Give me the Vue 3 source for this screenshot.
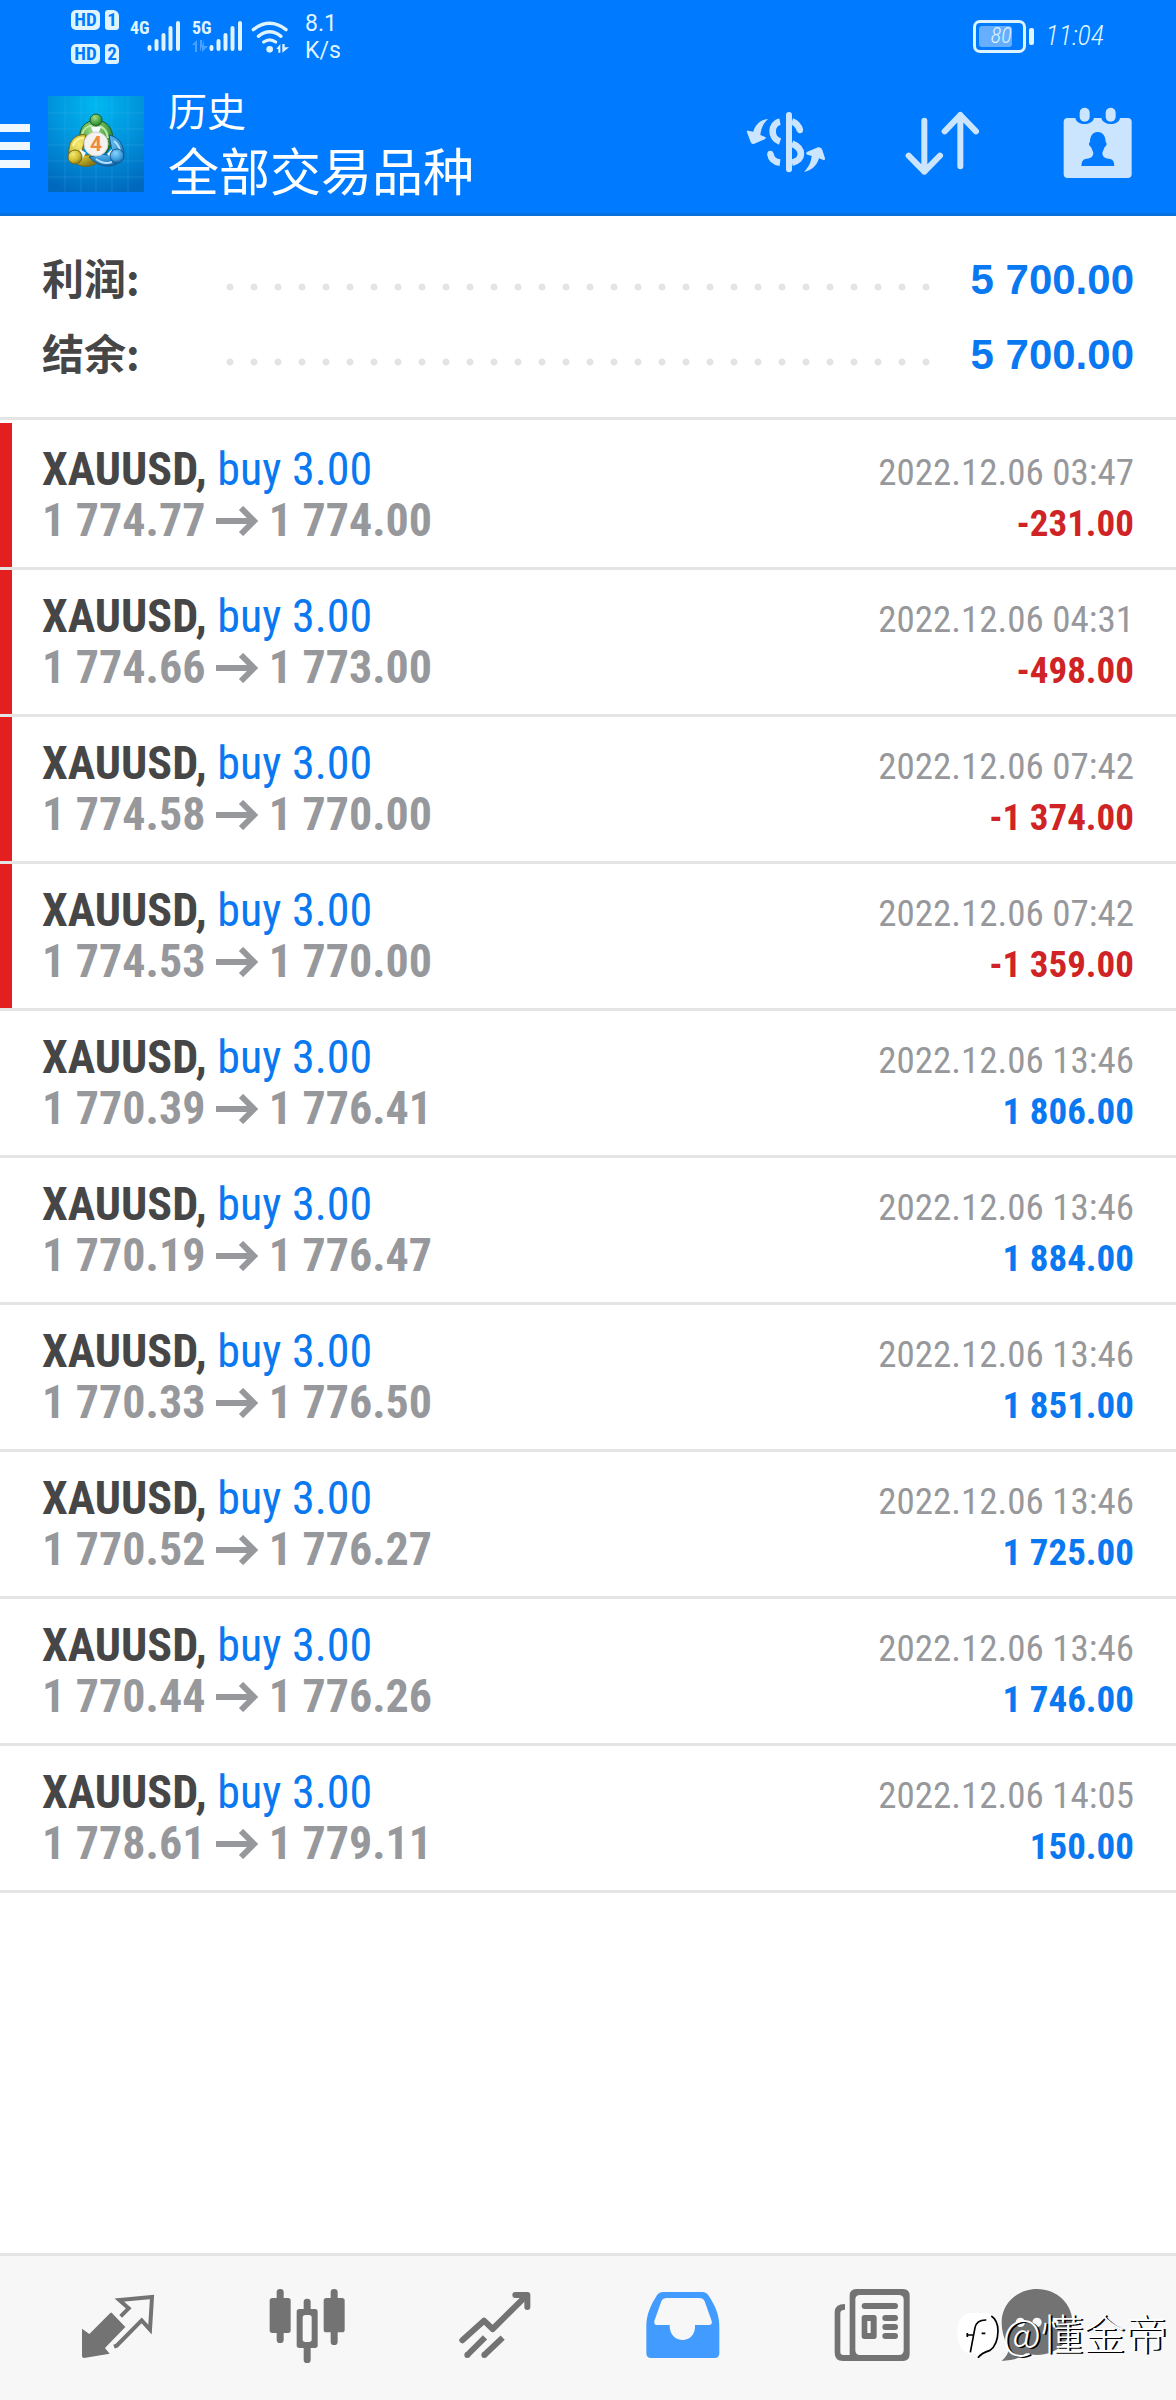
<script setup>
const summary = [
  { label: '利润:', value: '5 700.00' },
  { label: '结余:', value: '5 700.00' },
]

const deals = [
  { open: '1 774.77', close: '1 774.00', time: '2022.12.06 03:47', profit: '-231.00' },
  { open: '1 774.66', close: '1 773.00', time: '2022.12.06 04:31', profit: '-498.00' },
  { open: '1 774.58', close: '1 770.00', time: '2022.12.06 07:42', profit: '-1 374.00' },
  { open: '1 774.53', close: '1 770.00', time: '2022.12.06 07:42', profit: '-1 359.00' },
  { open: '1 770.39', close: '1 776.41', time: '2022.12.06 13:46', profit: '1 806.00' },
  { open: '1 770.19', close: '1 776.47', time: '2022.12.06 13:46', profit: '1 884.00' },
  { open: '1 770.33', close: '1 776.50', time: '2022.12.06 13:46', profit: '1 851.00' },
  { open: '1 770.52', close: '1 776.27', time: '2022.12.06 13:46', profit: '1 725.00' },
  { open: '1 770.44', close: '1 776.26', time: '2022.12.06 13:46', profit: '1 746.00' },
  { open: '1 778.61', close: '1 779.11', time: '2022.12.06 14:05', profit: '150.00' },
]

const isLoss = (deal) => deal.profit.startsWith('-')
</script>

<template>
  <div class="app">
    <header class="header">
      <div class="status">
        <div class="sims">
          <div v-for="n in 2" :key="n" class="sim">
            <span class="hd">HD</span>
            <span class="slot">{{ n }}</span>
          </div>
        </div>
        <div class="signal">
          <span class="net">4G</span>
          <svg width="34" height="32" viewBox="0 0 34 32" class="bars">
            <path d="M2.5 27v2M9.5 21v8M16.5 15v14M23.5 8v21M31 3v26" />
          </svg>
        </div>
        <div class="signal">
          <span class="net">5G</span>
          <svg width="34" height="32" viewBox="0 0 34 32" class="bars">
            <path d="M2.5 27v2M9.5 21v8M16.5 15v14M23.5 8v21M31 3v26" />
          </svg>
          <svg width="16" height="12" viewBox="0 0 16 12" class="traffic">
            <path d="M0 5L5 0V12H3V5ZM8 12V0H10V7H12V0M10 12L16 6H10Z" />
          </svg>
        </div>
        <svg class="wifi" width="40" height="34" viewBox="0 0 120 102">
          <g fill="none" stroke="#dff4ff" stroke-width="10" stroke-linecap="round">
            <path d="M7 29Q56 -9 105 29" />
            <path d="M22 49Q56 22 90 49" />
            <path d="M38 66Q56 53 74 66" />
          </g>
          <circle cx="56" cy="88" r="10" fill="#dff4ff" />
          <path d="M76 87L88 72V98H82V87ZM94 72V98L114 82H101V72Z" fill="#dff4ff" />
        </svg>
        <div class="speed"><span>8.1</span><span>K/s</span></div>
        <div class="power">
          <span class="battery"><span class="level">80</span></span>
          <span class="terminal"></span>
        </div>
        <time class="clock">11:04</time>
      </div>

      <div class="toolbar">
        <button class="menu" aria-label="菜单"><i></i><i></i><i></i></button>
        <svg class="logo" width="96" height="96" viewBox="0 0 96 96">
          <defs>
            <radialGradient id="sky" cx="50%" cy="10%" r="95%">
              <stop offset="0" stop-color="#00b8f0" />
              <stop offset="0.5" stop-color="#0093dc" />
              <stop offset="1" stop-color="#0068bd" />
            </radialGradient>
            <radialGradient id="green" cx="40%" cy="30%" r="75%">
              <stop offset="0" stop-color="#a6dc86" />
              <stop offset="0.6" stop-color="#4aa545" />
              <stop offset="1" stop-color="#216f2b" />
            </radialGradient>
            <radialGradient id="gold" cx="35%" cy="30%" r="75%">
              <stop offset="0" stop-color="#f5ea77" />
              <stop offset="0.6" stop-color="#d0bd30" />
              <stop offset="1" stop-color="#8a7a18" />
            </radialGradient>
            <radialGradient id="blue" cx="40%" cy="30%" r="75%">
              <stop offset="0" stop-color="#8bd2fa" />
              <stop offset="0.6" stop-color="#3d9fe0" />
              <stop offset="1" stop-color="#145f9f" />
            </radialGradient>
          </defs>
          <rect width="96" height="96" fill="url(#sky)" />
          <path d="M17 0V96M33 0V96M48 0V96M64 0V96M80 0V96M0 17H96M0 33H96M0 49H96M0 65H96M0 81H96" stroke="#5cc5f5" stroke-opacity=".2" />
          <path d="M33 46C29 32 37 25 48 24C60 25 67 34 64 48L58 57L48 38L36 48Z" fill="url(#green)" stroke="#175c2a" />
          <path d="M34 38C37 30 42 29 48 30C55 30 59 35 60 42" fill="none" stroke="#bde9a5" stroke-width="2" />
          <path d="M38 39C27 37 20 46 21 57C25 70 38 74 49 67L44 59L33 59Z" fill="url(#gold)" stroke="#756912" />
          <path d="M25 50C27 43 32 42 36 42" fill="none" stroke="#fff6a0" stroke-width="2" />
          <path d="M61 39C72 41 78 52 75 62C68 72 54 74 41 61L54 58L65 60Z" fill="url(#blue)" stroke="#15598f" />
          <path d="M66 45Q72 50 72 56M48 63Q56 69 64 66" fill="none" stroke="#b2e2ff" stroke-width="2" />
          <path d="M43 31H53L50 38H46ZM32 53L38 57L34 63ZM64 53L59 58L63 62Z" fill="#f5fbff" />
          <circle cx="48" cy="24" r="6" fill="url(#green)" stroke="#1b612d" />
          <circle cx="27" cy="61" r="7" fill="url(#gold)" stroke="#756912" />
          <circle cx="69" cy="60" r="7" fill="url(#blue)" stroke="#15598f" />
          <circle cx="48" cy="48" r="12" fill="#f5f1ee" stroke="#cfd0d0" />
          <text x="48" y="55" text-anchor="middle" class="logo-digit">4</text>
        </svg>
        <div class="titles">
          <span class="section">历史</span>
          <h1>全部交易品种</h1>
        </div>
        <div class="actions">
          <button aria-label="货币">
            <svg width="80" height="80" viewBox="138 312 240 240">
              <g fill="none" stroke="#cce5ff" stroke-width="18">
                <path d="M267 345V508" stroke-linecap="round" />
                <path d="M240 365C212 370 209 414 240 425M211 461C213 477 224 486 240 488" stroke-width="20" />
                <path d="M276 364Q294 370 300 391M276 431C311 445 312 480 276 488" stroke-width="20" />
              </g>
              <circle cx="211" cy="461" r="9" fill="#cce5ff" />
              <circle cx="300" cy="391" r="9" fill="#cce5ff" />
              <path d="M204 357C182 359 166 374 160 395L144 392Q139 391 141 397L152 426Q155 434 163 431L194 418Q201 413 194 410L181 405C183 384 190 370 204 357Z" fill="#cce5ff" />
              <path d="M312 516C334 512 350 498 357 475L370 480Q376 482 375 475L367 450Q364 440 354 442L322 455Q315 459 322 464L335 468C333 488 326 501 312 516Z" fill="#cce5ff" />
            </svg>
          </button>
          <button aria-label="排序">
            <svg width="80" height="80" viewBox="605 312 240 240">
              <g fill="none" stroke="#cce5ff" stroke-width="18" stroke-linecap="round" stroke-linejoin="round">
                <path d="M672 362V515M625 467L672 515L719 467" />
                <path d="M780 499V345M733 394L780 345L827 394" />
              </g>
            </svg>
          </button>
          <button aria-label="时间段">
            <svg width="80" height="80" viewBox="1075 312 240 240">
              <path d="M1104 354H1127C1131 378 1178 378 1183 354H1205C1211 378 1257 378 1261 354H1284Q1296 354 1296 366V522Q1296 534 1284 534H1104Q1092 534 1092 522V366Q1092 354 1104 354Z" fill="#cce5ff" />
              <rect x="1140" y="323" width="30" height="42" rx="15" fill="#cce5ff" />
              <rect x="1218" y="323" width="30" height="42" rx="15" fill="#cce5ff" />
              <path d="M1194 396C1178 396 1171 410 1171 426C1165 430 1169 439 1174 441L1181 458C1181 472 1170 475 1157 477Q1145 480 1145 498H1244Q1244 480 1232 477C1218 475 1208 472 1208 458L1215 441C1221 438 1223 430 1218 426C1218 410 1210 396 1194 396Z" fill="#007aff" />
            </svg>
          </button>
        </div>
      </div>
    </header>

    <main class="content">
      <dl class="summary">
        <div v-for="item in summary" :key="item.label" class="total">
          <dt>{{ item.label }}</dt>
          <span class="leader"></span>
          <dd>{{ item.value }}</dd>
        </div>
      </dl>

      <ul class="deals">
        <li v-for="(deal, i) in deals" :key="i" class="deal" :class="{ loss: isLoss(deal) }">
          <div class="line">
            <span class="symbol">XAUUSD, <span class="side">buy 3.00</span></span>
            <time class="time">{{ deal.time }}</time>
          </div>
          <div class="line">
            <span class="prices">
              {{ deal.open }}
              <svg class="arrow" width="42" height="30" viewBox="0 0 42 30">
                <path d="M0 15H37M25 2L38 15L25 28" fill="none" stroke="#97989c" stroke-width="6" />
              </svg>
              {{ deal.close }}
            </span>
            <span class="profit">{{ deal.profit }}</span>
          </div>
        </li>
      </ul>
    </main>

    <nav class="tabs">
      <button aria-label="行情">
        <svg width="80" height="80" viewBox="234 144 240 240">
          <path d="M335 218L376 261L315 324L329 341L252 354Q246 354 246 348V266L268 282L330 220Q333 217 335 218Z" />
          <path d="M362 229L386 205L358 180L456 171L450 269L425 241L350 317L342 320" fill="none" stroke="#737373" stroke-width="12" />
        </svg>
      </button>
      <button aria-label="图表">
        <svg width="80" height="80" viewBox="796 144 240 240">
          <rect x="804" y="174" width="63" height="105" rx="8" />
          <rect x="825" y="147" width="21" height="162" rx="10" />
          <rect x="966" y="174" width="63" height="103" rx="8" />
          <rect x="987" y="147" width="21" height="168" rx="10" />
          <rect x="885" y="207" width="63" height="117" rx="8" />
          <rect x="906" y="176" width="21" height="193" rx="10" />
          <rect x="903" y="225" width="27" height="81" rx="8" fill="#f7f7f7" />
        </svg>
      </button>
      <button aria-label="交易">
        <svg width="80" height="80" viewBox="161 144 240 240">
          <g fill="none" stroke="#737373" stroke-width="18">
            <path d="M183 301L248 242L274 267L376 166" stroke-linecap="round" stroke-linejoin="round" />
            <path d="M342 165H378V201" stroke-linecap="round" stroke-linejoin="round" />
            <path d="M198 345L251 292M249 345L304 293" />
          </g>
          <circle cx="198" cy="345" r="9" />
          <circle cx="249" cy="345" r="9" />
        </svg>
      </button>
      <button aria-label="历史" aria-current="page">
        <svg width="80" height="80" viewBox="728 144 240 240">
          <path fill="#429bff" fill-rule="evenodd" d="M788 156H906Q918 156 925 167C944 196 957 222 957 260V340Q957 354 943 354H752Q738 354 738 340V260C738 222 752 194 769 167Q776 156 788 156ZM799 174Q788 174 783 184L762 243Q760 255 770 255H808C806 315 888 315 884 255H925Q937 255 934 243L913 184Q908 174 897 174Z" />
        </svg>
      </button>
      <button aria-label="新闻">
        <svg width="80" height="80" viewBox="96 144 240 240">
          <path fill-rule="evenodd" d="M169 147H309Q329 147 329 167V343Q329 363 309 363H129Q104 363 104 338V217Q104 192 135 192V209Q121 209 121 220V336Q121 345 130 345H149V167Q149 147 169 147ZM180 165Q166 165 166 179V331Q166 345 180 345H296Q311 345 311 331V179Q311 165 296 165Z" />
          <path fill-rule="evenodd" d="M193 225H222Q230 225 230 233V289Q230 297 222 297H193Q185 297 185 289V233Q185 225 193 225ZM202 243V279H212V243Z" />
          <path d="M194 198H285M256 234H285M256 261H285M256 288H285" stroke="#737373" stroke-width="18" stroke-linecap="round" />
        </svg>
      </button>
      <button aria-label="消息">
        <svg width="80" height="80" viewBox="593 144 240 240">
          <path d="M713 147C772 147 819 191 819 246C819 301 772 345 713 345Q696 345 680 340Q655 362 607 363Q627 345 631 322C614 302 607 272 607 246C607 191 654 147 713 147Z" />
          <circle cx="663" cy="247" r="14" fill="#f7f7f7" />
          <circle cx="713" cy="247" r="14" fill="#f7f7f7" />
          <circle cx="763" cy="247" r="14" fill="#f7f7f7" />
        </svg>
      </button>
      <div class="credit">
        <svg width="44" height="48" viewBox="464 220 132 144">
          <path d="M505 226H560Q590 232 591 275Q592 318 572 338L545 350L529 362L524 348H505Q468 340 468 285Q468 232 505 226Z" fill="#fff" />
          <path d="M570 235Q590 248 590 280Q589 322 566 338Q540 346 530 360M555 247Q526 246 521 270L507 344M495 292H518M498 286V298M541 287H552" fill="none" stroke="#000" stroke-width="5" />
        </svg>
        <span>@懂金帝</span>
      </div>
    </nav>
  </div>
</template>

<style>
body {
  margin: 0;
}
</style>

<style scoped>
.app {
  display: flex;
  flex-direction: column;
  min-height: 100vh;
  background: #fff;
  font-family: "Roboto Condensed", "Liberation Sans Narrow", Roboto, "Noto Sans CJK SC", sans-serif;
}
button {
  padding: 0;
  border: 0;
  background: none;
}
svg {
  display: block;
}
.header {
  background: #007aff;
  border-bottom: 3px solid #0870dd;
  color: #fff;
}
.status {
  display: flex;
  height: 75px;
  padding: 0 72px 0 71px;
  box-sizing: border-box;
  color: #dff4ff;
}
.sims {
  display: flex;
  flex-direction: column;
  gap: 14px;
  padding-top: 10px;
}
.sim {
  display: flex;
  gap: 5px;
  color: #007aff;
  font-weight: 700;
  font-size: 19px;
  line-height: 20px;
  text-align: center;
}
.hd {
  width: 29px;
  height: 20px;
  border-radius: 5px;
  background: #dff4ff;
}
.slot {
  width: 14px;
  height: 20px;
  border-radius: 3px 6px 3px 3px;
  background: #dff4ff;
}
.signal {
  position: relative;
  display: flex;
  padding-top: 20px;
  margin-left: 11px;
}
.net {
  width: 17px;
  font-size: 18px;
  font-weight: 700;
  line-height: 16px;
}
.bars {
  fill: none;
  stroke: #dff4ff;
  stroke-width: 4;
  stroke-linecap: round;
}
.traffic {
  position: absolute;
  left: 0;
  top: 40px;
  fill: #4ba2ff;
}
.wifi {
  margin: 20px 0 0 8px;
}
.speed {
  display: flex;
  flex-direction: column;
  padding-top: 10px;
  margin-left: 14px;
  font-family: Roboto, sans-serif;
  font-size: 23px;
  line-height: 27px;
}
.power {
  display: flex;
  align-items: flex-start;
  gap: 3px;
  padding-top: 20px;
  margin-left: auto;
}
.battery {
  width: 53px;
  height: 33px;
  padding: 3px;
  box-sizing: border-box;
  border: 3px solid #dff4ff;
  border-radius: 7px;
}
.level {
  display: block;
  width: 33px;
  height: 21px;
  border-radius: 3px;
  background: #66afff;
  font-size: 22px;
  font-style: italic;
  font-weight: 300;
  line-height: 20px;
  text-align: right;
}
.terminal {
  width: 5px;
  height: 17px;
  margin-top: 8px;
  border-radius: 2px;
  background: #dff4ff;
}
.clock {
  margin: 18px 0 0 12px;
  font-size: 28px;
  font-style: italic;
  font-weight: 300;
  line-height: 36px;
}
.toolbar {
  display: flex;
  align-items: center;
  height: 138px;
  padding-right: 38px;
}
.menu {
  display: flex;
  flex-direction: column;
  gap: 10px;
  width: 30px;
  margin: 4px 18px 0 0;
}
.menu i {
  width: 30px;
  height: 8px;
  background: #f0f8ff;
}
.logo {
  margin-right: 24px;
}
.logo-digit {
  font: 700 21px Roboto, sans-serif;
  fill: #f08a3c;
}
.titles {
  display: flex;
  flex-direction: column;
  padding-bottom: 8px;
  font-family: "Noto Sans CJK SC", sans-serif;
}
.section {
  font-size: 39px;
  line-height: 58px;
}
h1 {
  margin: 0;
  font-size: 51px;
  font-weight: 400;
  line-height: 62px;
}
.actions {
  display: flex;
  gap: 76px;
  margin-left: auto;
}
.content {
  flex: 1;
}
.summary {
  margin: 0;
  padding: 26px 42px 25px;
  border-bottom: 3px solid #e4e4e4;
}
.total {
  display: flex;
  align-items: center;
  height: 75px;
}
dt {
  align-self: flex-start;
  width: 176px;
  color: #464646;
  font: 700 42px "Noto Sans CJK SC", sans-serif;
  line-height: 70px;
}
.leader {
  flex: 1;
  height: 8px;
  margin-top: 15px;
  background: radial-gradient(circle, #e4e4e4 3px, transparent 4px) 0 0 / 24px 8px repeat-x;
}
dd {
  width: 196px;
  margin: 0;
  color: #0a78f0;
  font: 700 42px "Liberation Sans", sans-serif;
  text-align: right;
}
.deals {
  margin: 0;
  padding: 3px 0 0;
  list-style: none;
}
.deal {
  padding: 21px 42px;
  border-bottom: 3px solid #e4e4e4;
}
.loss {
  background: linear-gradient(#e31f1f, #e31f1f) 0 0 / 12px 100% no-repeat padding-box;
}
.line {
  display: flex;
  justify-content: space-between;
  align-items: baseline;
  height: 51px;
  font-size: 46px;
  line-height: 51px;
}
.symbol {
  color: #464646;
  font-weight: 700;
}
.side {
  color: #0a78f0;
  font-weight: 400;
}
.time {
  color: #97989c;
  font-size: 37px;
}
.prices {
  color: #97989c;
  font-weight: 700;
}
.arrow {
  display: inline-block;
}
.profit {
  color: #0a78f0;
  font-size: 37px;
  font-weight: 700;
}
.loss .profit {
  color: #d02325;
}
.tabs {
  position: relative;
  display: grid;
  grid-template-columns: repeat(5, 1fr) 142px;
  align-items: center;
  justify-items: center;
  height: 144px;
  padding: 0 68px 0 24px;
  border-top: 3px solid #e4e4e4;
  background: #f7f7f7;
}
.tabs button svg {
  fill: #737373;
}
.credit {
  position: absolute;
  right: 9px;
  bottom: 38px;
  display: flex;
  align-items: center;
  gap: 3px;
  color: #fff;
  font-family: "Noto Sans CJK SC", sans-serif;
  font-size: 42px;
  font-weight: 300;
  line-height: 60px;
  text-shadow: 2px 1px 0 #000;
}
.credit svg {
  margin-top: 6px;
}
</style>
